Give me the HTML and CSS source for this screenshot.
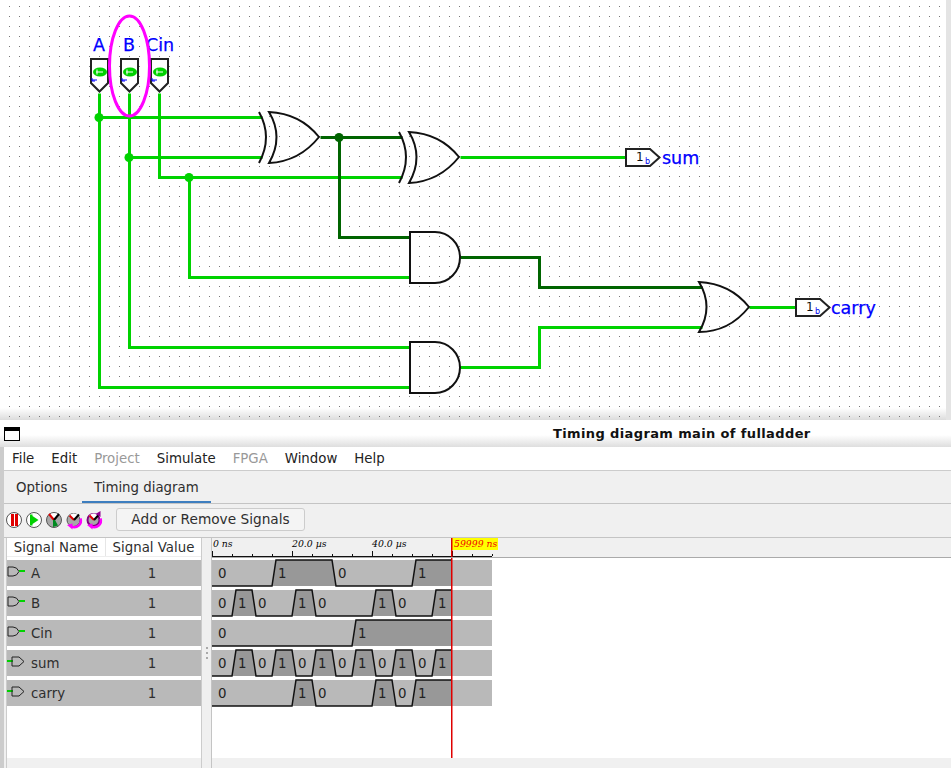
FILE: index.html
```html
<!DOCTYPE html>
<html lang="en">
<head>
    <meta charset="UTF-8">
    <title>Timing diagram main of fulladder</title>
    <link rel="stylesheet" href="styles.css">
</head>
<body>
    <div class="circuit">
        <svg class="circuit-svg" width="946" height="420">
            <defs>
                <pattern id="grid" width="10" height="10" patternUnits="userSpaceOnUse">
                    <rect x="9" y="6" width="1" height="1" fill="#777"></rect>
                </pattern>
                <path id="xor" d="M259 112Q273 137 259 163M269 112C290 113 307 122 319 137C307 152 290 162 269 163Q284 137 269 112Z"></path>
                <path id="and" d="M410 232H435A25 25.500 0 0 1 435 283H410Z"></path>
                <g id="pin-in">
                    <path class="pin" d="M91 59H108V83L99.500 91.500L91 83Z"></path>
                    <ellipse cx="100" cy="72" rx="7" ry="4.500" fill="#00d200"></ellipse>
                    <path d="M96 72H103M97 69.500V74.500" stroke="#fff" fill="none"></path>
                    <path d="M92 80H97M92 78V81H95" stroke="#00f" fill="none"></path>
                </g>
                <g id="pin-out">
                    <path class="pin" d="M626 149H650L659.500 157.500L650 166H626Z"></path>
                </g>
            </defs>
            <rect width="946" height="420" fill="url(#grid)"></rect>

            <g class="wire on">
                <path d="M99 93V387H410"></path>
                <path d="M99 117H262"></path>
                <path d="M129 93V347H410"></path>
                <path d="M129 157H262"></path>
                <path d="M159 93V177H402"></path>
                <path d="M189 177V277H410"></path>
                <path d="M460 157H626"></path>
                <path d="M460 367H539V327H702"></path>
                <path d="M749 307H796"></path>
            </g>
            <g class="wire off">
                <path d="M320 137H402"></path>
                <path d="M339 137V237H410"></path>
                <path d="M460 257H539V287H702"></path>
            </g>
            <circle cx="99" cy="117.500" r="4.500" fill="#00d200"></circle>
            <circle cx="129" cy="157.500" r="4.500" fill="#00d200"></circle>
            <circle cx="189" cy="177.500" r="4.500" fill="#00d200"></circle>
            <circle cx="339" cy="137.500" r="4.500" fill="#006400"></circle>

            <g class="gate">
                <use href="#xor"></use>
                <use href="#xor" x="140" y="20"></use>
                <use href="#and"></use>
                <use href="#and" y="110"></use>
                <path d="M699 282C720 283 737 292 749 307C737 322 720 332 699 332Q714 307 699 282Z"></path>
            </g>

            <use href="#pin-in"></use>
            <use href="#pin-in" x="30"></use>
            <use href="#pin-in" x="60"></use>
            <use href="#pin-out"></use>
            <use href="#pin-out" x="170" y="150"></use>

            <text class="bit" x="636" y="161">1</text>
            <text class="bit-unit" x="645" y="164">b</text>
            <text class="bit" x="806" y="311">1</text>
            <text class="bit-unit" x="815" y="314">b</text>

            <text class="name mid" x="99" y="51">A</text>
            <text class="name mid" x="129" y="51">B</text>
            <text class="name mid" x="160" y="51">Cin</text>
            <text class="name" x="662" y="164">sum</text>
            <text class="name" x="831" y="314">carry</text>

            <ellipse class="mark" cx="129.500" cy="66" rx="20" ry="50"></ellipse>
        </svg>
        <div class="scrollbar"></div>
    </div>

    <div class="titlebar">
        <div class="win-icon"></div>
        <div class="win-title">Timing diagram main of fulladder</div>
    </div>

    <div class="window">
        <div class="menubar">
            <span>File</span>
            <span>Edit</span>
            <span class="disabled">Project</span>
            <span>Simulate</span>
            <span class="disabled">FPGA</span>
            <span>Window</span>
            <span>Help</span>
        </div>
        <div class="tabs">
            <div class="tab">Options</div>
            <div class="tab active">Timing diagram</div>
        </div>
        <div class="toolbar">
            <div class="tool-icons">
                <svg width="20" height="20" viewBox="0 0 20 20">
                    <circle class="tool-round" cx="8" cy="10" r="7.500"></circle>
                    <path d="M5 4h3v12h-3zM9 4h3v12h-3z" fill="#e00000"></path>
                </svg>
                <svg width="20" height="20" viewBox="0 0 20 20">
                    <circle class="tool-round" cx="8" cy="10" r="7.500"></circle>
                    <path d="M4 4.500h2.500v11h-2.500zM6.500 6l6 4-6 4z" fill="#00d000"></path>
                </svg>
                <svg width="20" height="20" viewBox="0 0 20 20">
                    <circle class="tool-round grey" cx="8" cy="10" r="7.500"></circle>
                    <path d="M3 5L8 10L13 5A7 7 0 0 0 3 5Z" fill="#fff"></path>
                    <path d="M3 4L8 10" stroke="#e00000" stroke-width="2"></path>
                    <path d="M8 10L13 4" stroke="#000" stroke-width="2"></path>
                    <path d="M7 10h2l3 5.500-5 1.500z" fill="#008a20"></path>
                </svg>
                <svg width="20" height="20" viewBox="0 0 20 20">
                    <circle class="tool-round grey" cx="7.500" cy="10" r="6.500"></circle>
                    <path d="M3 6L7.500 10L12 5A6 6 0 0 0 3 6Z" fill="#fff"></path>
                    <path d="M3.500 5.500L8 10" stroke="#e00000" stroke-width="2"></path>
                    <path d="M8 10L13 4.500" stroke="#000" stroke-width="2"></path>
                    <path d="M14.500 8.500A6.500 6.500 0 0 1 5.500 16.500" fill="none" stroke="#ff00ff" stroke-width="2.500"></path>
                    <path d="M1 15L6.500 13.500L6.500 19.500z" fill="#ff00ff"></path>
                </svg>
                <svg width="20" height="20" viewBox="0 0 20 20">
                    <circle class="tool-round purple" cx="7.500" cy="10" r="6"></circle>
                    <path d="M3 6L7.500 10L12 5A6 6 0 0 0 3 6Z" fill="#fff"></path>
                    <path d="M3.500 5.500L8 10" stroke="#e00000" stroke-width="2"></path>
                    <path d="M8 10L13 4.500" stroke="#000" stroke-width="2"></path>
                    <path d="M14.500 8.500A6.500 6.500 0 0 1 5.500 16.500" fill="none" stroke="#ff00ff" stroke-width="2.500"></path>
                    <path d="M1 15L6.500 13.500L6.500 19.500z" fill="#ff00ff"></path>
                    <path d="M14.500 1L14.500 7L9.500 4z" fill="#900090"></path>
                </svg>
            </div>
            <button class="add-btn">Add or Remove Signals</button>
        </div>

        <div class="panels">
            <div class="signals">
                <div class="signals-head">
                    <div class="col-name">Signal Name</div>
                    <div class="col-value">Signal Value</div>
                </div>
                <div class="signal-row">
                    <svg class="sig-icon" width="18" height="12"><path class="sig-d" d="M1 1H6Q10 1 12 5.500Q10 10 6 10H1Z"></path><path class="sig-stub" d="M12 5H18"></path></svg>
                    <span class="sig-name">A</span><span class="sig-value">1</span>
                </div>
                <div class="signal-row">
                    <svg class="sig-icon" width="18" height="12"><path class="sig-d" d="M1 1H6Q10 1 12 5.500Q10 10 6 10H1Z"></path><path class="sig-stub" d="M12 5H18"></path></svg>
                    <span class="sig-name">B</span><span class="sig-value">1</span>
                </div>
                <div class="signal-row">
                    <svg class="sig-icon" width="18" height="12"><path class="sig-d" d="M1 1H6Q10 1 12 5.500Q10 10 6 10H1Z"></path><path class="sig-stub" d="M12 5H18"></path></svg>
                    <span class="sig-name">Cin</span><span class="sig-value">1</span>
                </div>
                <div class="signal-row">
                    <svg class="sig-icon" width="18" height="12"><path class="sig-stub" d="M0 5H6"></path><path class="sig-d" d="M5 1H12L17 5.500L12 10H5Z"></path></svg>
                    <span class="sig-name">sum</span><span class="sig-value">1</span>
                </div>
                <div class="signal-row">
                    <svg class="sig-icon" width="18" height="12"><path class="sig-stub" d="M0 5H6"></path><path class="sig-d" d="M5 1H12L17 5.500L12 10H5Z"></path></svg>
                    <span class="sig-name">carry</span><span class="sig-value">1</span>
                </div>
            </div>
            <div class="splitter"><i></i><i></i><i></i></div>
            <div class="chart">
                <svg id="ruler" class="ruler" width="300" height="20"></svg>
                <svg id="waves" class="waves" width="300" height="200"></svg>
            </div>
        </div>
    </div>

    <script src="script.js"></script>
</body>
</html>
```

FILE: styles.css
```css
* {
    margin: 0;
    padding: 0;
    box-sizing: border-box;
}

body {
    width: 951px;
    height: 768px;
    overflow: hidden;
    background: #f0f0f0;
    color: #2e2e2e;
    font-family: 'DejaVu Sans', sans-serif;
    font-size: 13.33px;
}

/* circuit canvas */
.circuit {
    display: flex;
    height: 420px;
    background: linear-gradient(to bottom, #fff 408px, #dcdcdc 420px);
}

.circuit-svg {
    display: block;
    flex: none;
}

.scrollbar {
    flex: 1;
    background: #e4e4e4;
}

.wire {
    transform: translate(0.5px, 0.5px);
}

.wire path {
    fill: none;
    stroke-width: 3;
}

.wire.on path {
    stroke: #00d200;
}

.wire.off path {
    stroke: #006400;
}

.gate path,
.gate use {
    fill: none;
    stroke: #111;
    stroke-width: 2;
}

.pin {
    fill: #fff;
    stroke: #222;
    stroke-width: 2;
}

.mark {
    fill: none;
    stroke: #ff00ff;
    stroke-width: 3;
}

.name {
    fill: #0000ff;
    stroke: #0000ff;
    stroke-width: 0.25px;
    font-size: 17.5px;
}

.mid {
    text-anchor: middle;
}

.bit {
    fill: #111;
    font-size: 12px;
}

.bit-unit {
    fill: #0000f0;
    font-size: 8px;
}

/* window chrome */
.titlebar {
    display: flex;
    align-items: center;
    height: 27px;
    padding-left: 4px;
    background: linear-gradient(to bottom, #fff 15px, #dedede 27px);
}

.win-icon {
    width: 16px;
    height: 14px;
    background: #fff;
    border: 1px solid #000;
    border-top-width: 4px;
}

.win-title {
    margin-left: 533px;
    color: #111;
    font-size: 13px;
    font-weight: bold;
    letter-spacing: 0.375px;
}

.window {
    height: 321px;
    border-left: 4px solid #ccc;
    display: flex;
    flex-direction: column;
}

.menubar {
    display: flex;
    gap: 17px;
    align-items: center;
    height: 24px;
    padding-left: 8px;
    background: #fff;
    border-bottom: 1px solid #ccc;
    color: #222;
}

.menubar .disabled {
    color: #999;
}

.tabs {
    display: flex;
    height: 33px;
    border-bottom: 1px solid #c4c4c4;
}

.tab {
    width: 78px;
    height: 32px;
    padding: 9px 0 0 12px;
}

.tab.active {
    width: 129px;
    border-bottom: 2px solid #3d7ebf;
}

.toolbar {
    display: flex;
    align-items: center;
    height: 34px;
    border-bottom: 1px solid #c4c4c4;
    padding: 0 0 2px 2px;
}

.tool-icons {
    display: flex;
    width: 110px;
}

.tool-icons svg {
    display: block;
    flex: none;
}

.tool-round {
    fill: #fff;
    stroke: #555;
}

.tool-round.grey {
    fill: #a8a8a8;
}

.tool-round.purple {
    fill: #a8a8a8;
    stroke: #800080;
    stroke-width: 2;
}

.add-btn {
    width: 189px;
    height: 23px;
    padding-bottom: 2px;
    border: 1px solid #ccc;
    border-radius: 3px;
    background: #f4f4f4;
    color: #2e2e2e;
    font-family: inherit;
    font-size: 13.7px;
}

/* bottom panels */
.panels {
    display: flex;
    flex: 1;
    padding-left: 2px;
}

.signals {
    display: flex;
    flex-direction: column;
    gap: 4px;
    width: 196px;
    background: linear-gradient(to bottom, #fff 220px, #f0f0f0 220px);
    border: 1px solid #ccc;
    border-top: none;
    border-bottom: none;
}

.signals-head {
    display: flex;
    height: 19px;
    line-height: 20px;
    text-align: center;
    border-bottom: 1px solid #eee;
    margin-bottom: -1px;
}

.col-name {
    width: 99px;
    border-right: 1px solid #e6e6e6;
}

.col-value {
    flex: 1;
}

.signal-row {
    display: flex;
    align-items: center;
    height: 26px;
    background: #b9b9b9;
}

.sig-icon {
    flex: none;
    margin-bottom: 3px;
}

.sig-d {
    fill: none;
    stroke: #222;
}

.sig-stub {
    fill: none;
    stroke: #00d200;
    stroke-width: 2;
}

.sig-name {
    width: 101px;
    margin-left: 6px;
}

.sig-value {
    width: 40px;
    text-align: center;
}

.splitter {
    display: flex;
    flex-direction: column;
    justify-content: center;
    align-items: center;
    gap: 3px;
    width: 9px;
}

.splitter i {
    width: 2px;
    height: 2px;
    background: #aaa;
}

.chart {
    flex: 1;
    border-left: 1px solid #c4c4c4;
}

.ruler {
    display: block;
    width: 100%;
    height: 20px;
    border-bottom: 1px solid #aaa;
}

.waves {
    display: block;
    width: 100%;
    background: #fff;
}

.tick {
    stroke: #111;
    fill: none;
}

.tick-label {
    fill: #000;
    font-family: 'DejaVu Serif', serif;
    font-style: italic;
    font-size: 9.3px;
}

.cursor-tag {
    fill: #ffff00;
}

.cursor-label {
    fill: #f00000;
    font-family: 'DejaVu Serif', serif;
    font-style: italic;
    font-size: 9.3px;
}

.cursor-line {
    stroke: #e00000;
    stroke-width: 1.500;
}

.row-bg {
    fill: #b9b9b9;
}

.row-high {
    fill: #989898;
}

.row-line {
    fill: none;
    stroke: #111;
    stroke-width: 1.500;
}

.row-text {
    fill: #222;
    font-size: 13.33px;
}
```

FILE: script.js
```js
// Waveforms: each signal starts low and flips at these x offsets (px from time 0)
const signals = [
    [60, 120, 200],
    [20, 40, 80, 100, 160, 180, 220],
    [140],
    [20, 40, 60, 80, 100, 120, 140, 160, 180, 200, 220],
    [80, 100, 160, 180, 200]
];
const END = 240;
const SLOPE = 4;
const ROW_H = 26;
const ROW_PITCH = 30;

let rows = '';
signals.forEach((flips, index) => {
    const top = 2 + index * ROW_PITCH;
    const bottom = top + ROW_H;
    rows += `<rect class="row-bg" x="0" y="${top}" width="280" height="${ROW_H}"></rect>`;

    let level = 0;
    let start = 0;
    let line = `0,${bottom}`;
    let labels = `<text class="row-text" x="6" y="${top + 18}">0</text>`;
    const points = [...flips, END];

    points.forEach((x, i) => {
        if (i < flips.length) {
            const fromY = level ? top : bottom;
            const toY = level ? bottom : top;
            line += ` ${x},${fromY} ${x + SLOPE},${toY}`;
        } else {
            line += ` ${END},${level ? top : bottom}`;
        }
        if (level) {
            const d = `${start},${bottom} ${start + SLOPE},${top} ${Math.min(x, END)},${top}`
                + (x < END ? ` ${x + SLOPE},${bottom}` : ` ${END},${bottom}`);
            rows += `<polygon class="row-high" points="${d}"></polygon>`;
        }
        if (i < flips.length) {
            level = 1 - level;
            start = x;
            labels += `<text class="row-text" x="${x + 6}" y="${top + 18}">${level}</text>`;
        }
    });
    rows += `<polyline class="row-line" points="${line}"></polyline>${labels}`;
});
rows += `<line class="cursor-line" x1="239.750" y1="0" x2="239.750" y2="200"></line>`;
document.getElementById('waves').innerHTML = rows;

// Ruler
let ruler = '';
for (let x = 0; x <= 280; x += 20) {
    const h = x % 80 === 0 ? 5 : 2;
    ruler += `<path class="tick" d="M${x + 0.5} 18V${18 - h}"></path>`;
}
ruler += `<path class="tick" d="M0 18.500H280"></path>`;
ruler += `<text class="tick-label" x="1" y="8.500">0 ns</text>`;
ruler += `<text class="tick-label" x="80" y="8.500">20.0 µs</text>`;
ruler += `<text class="tick-label" x="160" y="8.500">40.0 µs</text>`;
ruler += `<rect class="cursor-tag" x="240" y="0" width="46" height="12"></rect>`;
ruler += `<text class="cursor-label" x="242" y="8.500">59999 ns</text>`;
ruler += `<line class="cursor-line" x1="239.750" y1="0" x2="239.750" y2="20"></line>`;
document.getElementById('ruler').innerHTML = ruler;
```
